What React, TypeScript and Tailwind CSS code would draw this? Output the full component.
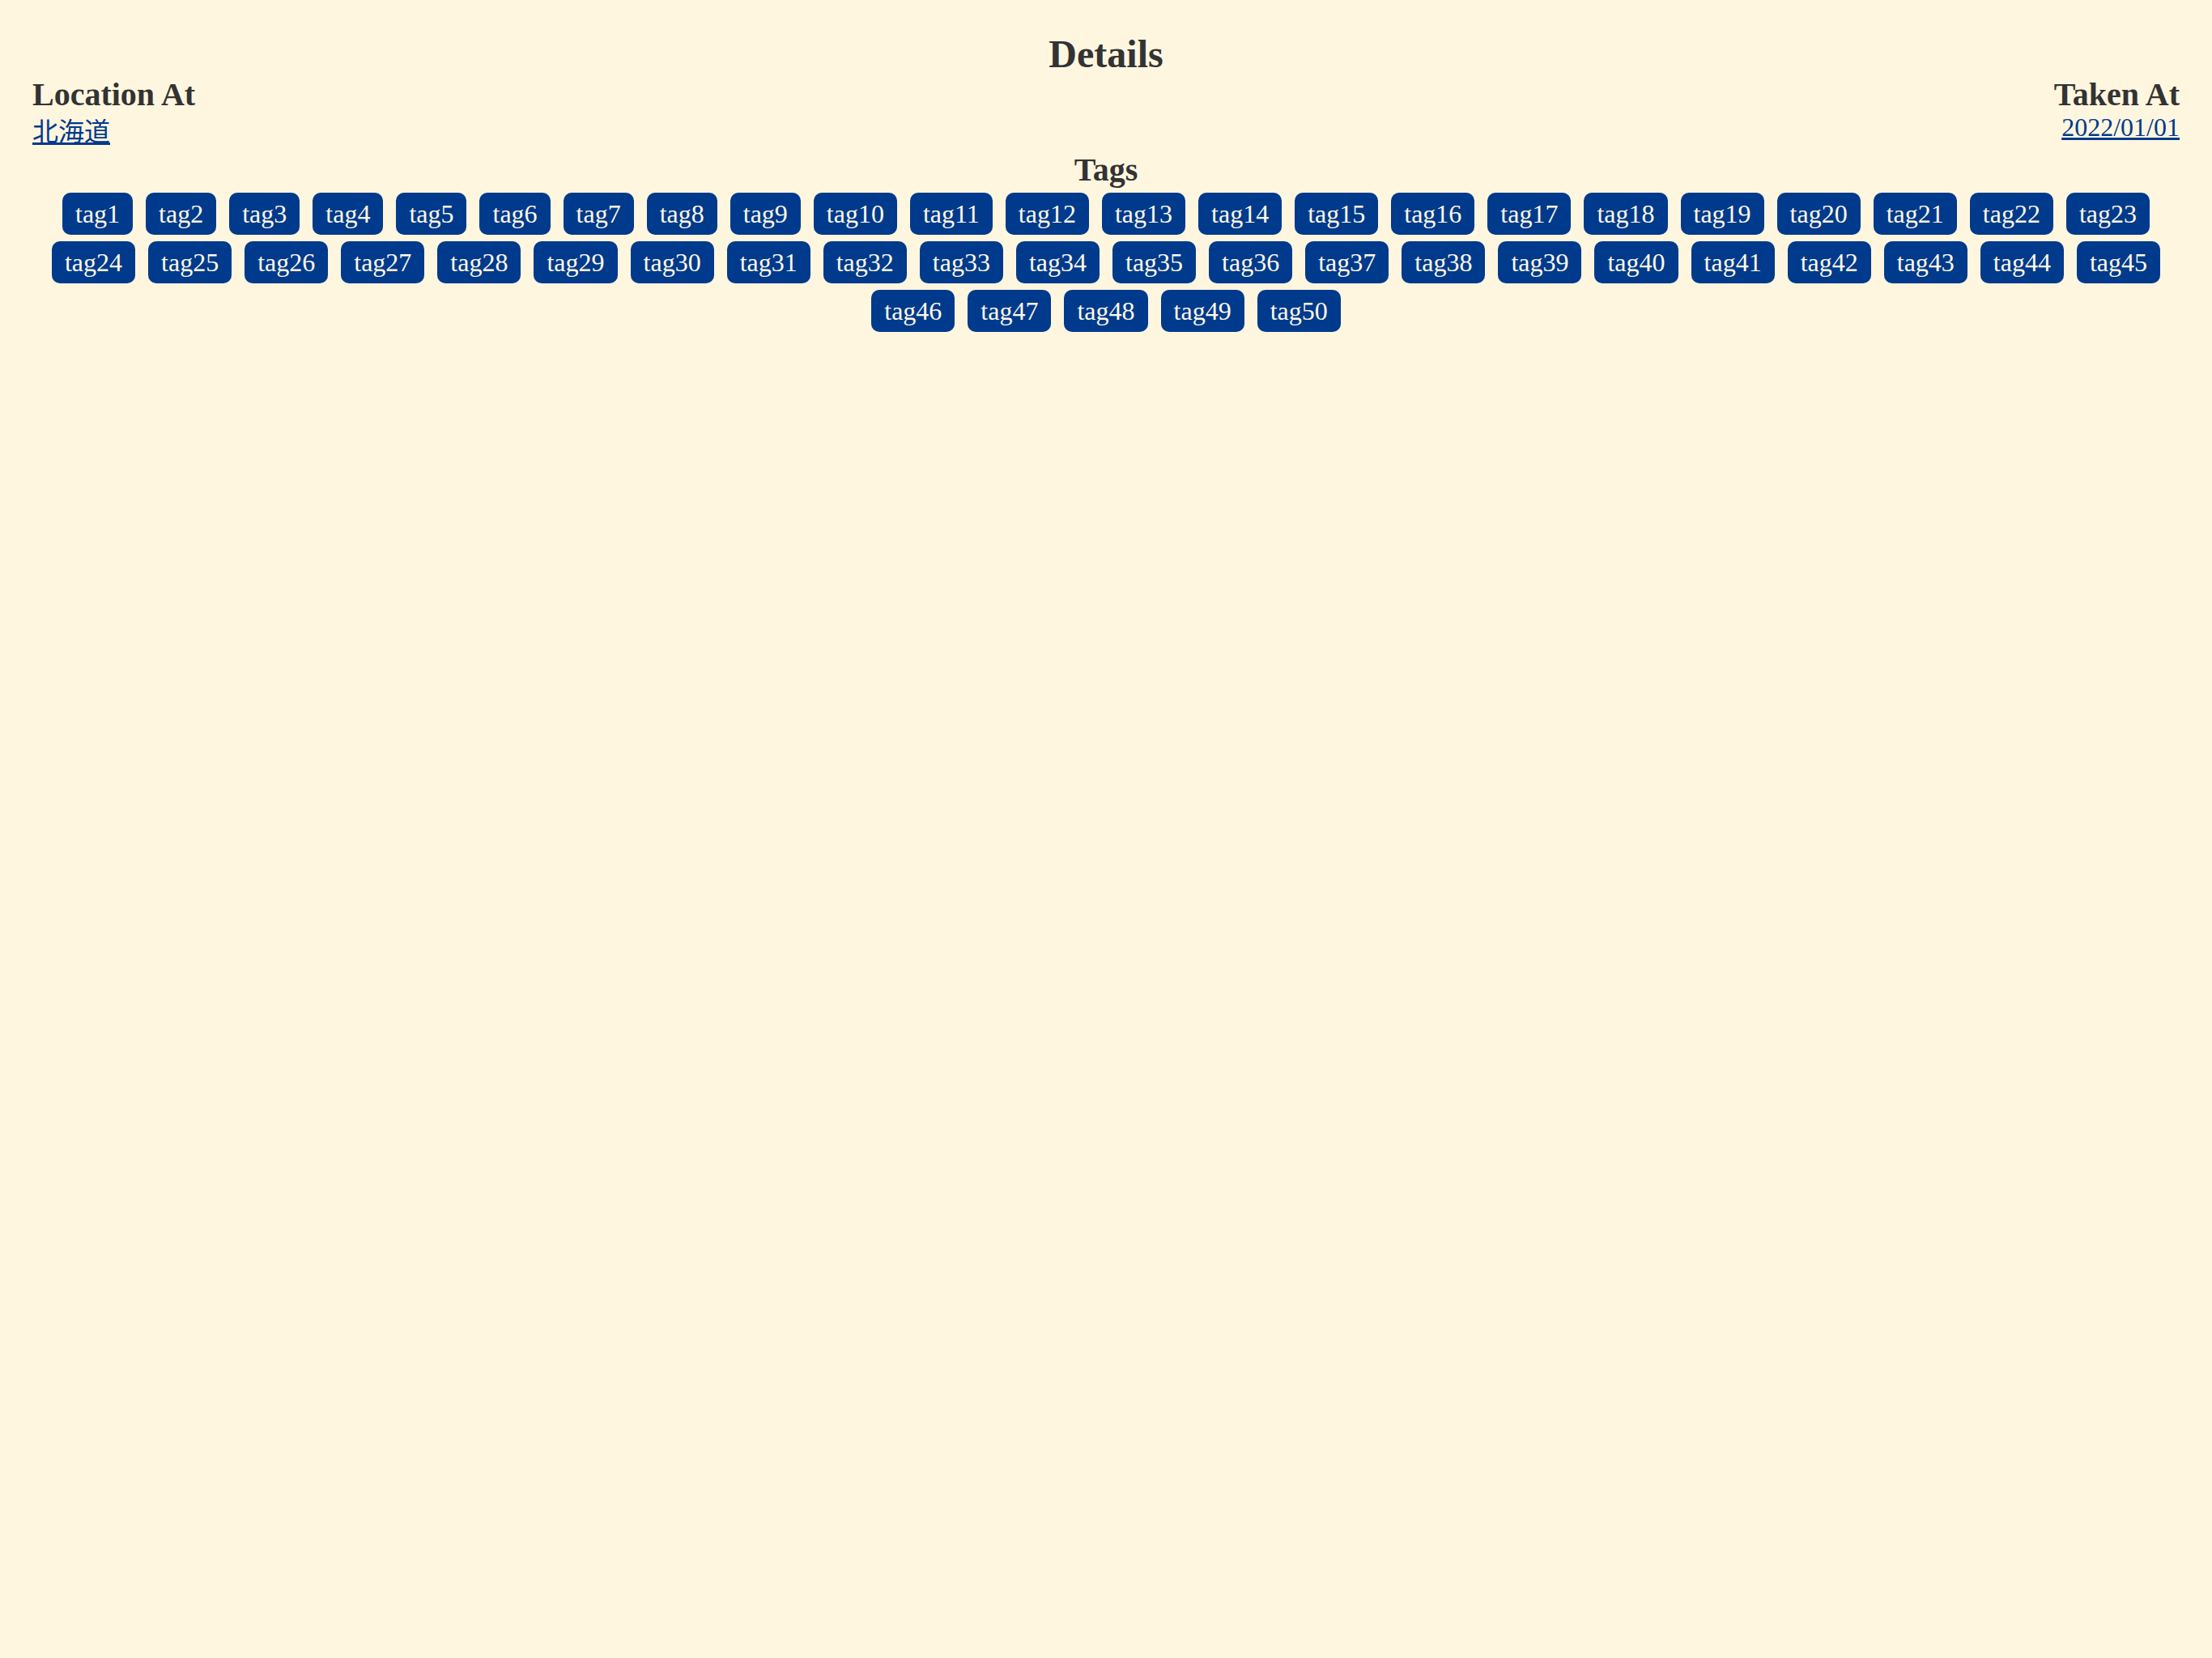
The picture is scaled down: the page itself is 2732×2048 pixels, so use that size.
const tags = Array.from({ length: 50 }, (_, i) => `tag${i + 1}`);

const App = () => {
  return (
    <div
      className="min-h-screen bg-[#fff6df] px-[40px] pt-[40px] text-[#333333]"
      style={{ fontFamily: '"Liberation Serif", "Noto Sans CJK JP", serif' }}
    >
      <h2 className="text-center text-[48px] font-bold leading-[53px]">Details</h2>

      <div className="flex justify-between">
        <div className="flex flex-col items-start">
          <h3 className="mt-[2px] text-[40px] font-bold leading-[44px]">Location At</h3>
          <a href="#" className="text-[32px] leading-normal text-[#003a8c] underline">
            北海道
          </a>
        </div>
        <div className="flex flex-col items-end">
          <h3 className="mt-[2px] text-[40px] font-bold leading-[44px]">Taken At</h3>
          <a href="#" className="text-[32px] leading-[36px] text-[#003a8c] underline">
            2022/01/01
          </a>
        </div>
      </div>

      <h3 className="mt-[1px] text-center text-[40px] font-bold leading-[44px]">Tags</h3>

      <div className="mt-[6px] flex flex-wrap justify-center gap-x-[16px] gap-y-[8px]">
        {tags.map((tag) => (
          <span
            key={tag}
            className="rounded-[10px] bg-[#003a8c] px-[16px] py-[8px] text-[32px] leading-[36px] text-[#fff8e6]"
          >
            {tag}
          </span>
        ))}
      </div>
    </div>
  );
};

export default App;
